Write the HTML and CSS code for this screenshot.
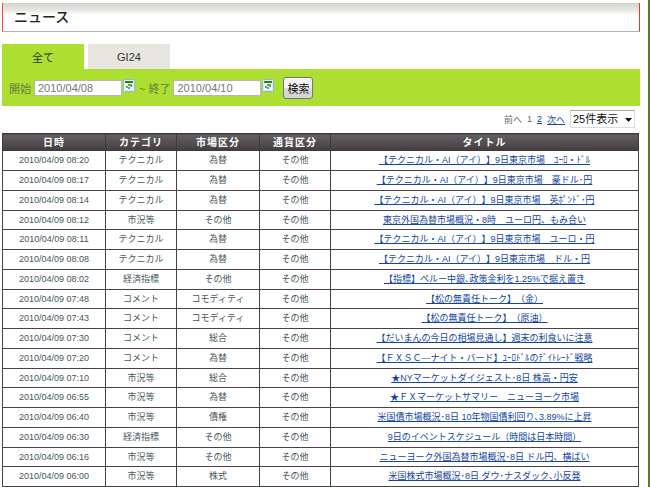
FILE: index.html
```html
<!DOCTYPE html>
<html lang="ja">
<head>
    <meta charset="UTF-8">
    <meta name="viewport" content="width=device-width, initial-scale=1.0">
    <title>ニュース</title>

    <link rel="stylesheet" href="styles.css">
</head>
<body>
    <div class="container">
        <h1 class="title">ニュース</h1>

        <div class="tabs">
            <button class="tab active" type="button">全て</button>
            <button class="tab" type="button">GI24</button>
        </div>

        <form class="search">
            <label for="dateFrom">開始</label>
            <input class="date" type="text" id="dateFrom" value="2010/04/08">
            <button class="calendar" type="button" aria-label="開始日">
                <svg width="12" height="13" viewBox="0 0 12 13">
                    <rect x="0.5" y="0.5" width="11" height="12" rx="1" fill="#d9ebf8" stroke="#8fb8dc"/>
                    <rect x="2" y="2" width="8" height="2" fill="#2f7a22"/>
                    <rect x="2" y="4" width="8" height="7" fill="#f4faf4"/>
                    <path d="M5 5h2v2H5zM7 5h2v3H7zM3 7h2v2H3zM5 8h2v2H5z" fill="#6f9a78"/>
                </svg>
            </button>
            <label for="dateTo">~ 終了</label>
            <input class="date" type="text" id="dateTo" value="2010/04/10">
            <button class="calendar" type="button" aria-label="終了日">
                <svg width="12" height="13" viewBox="0 0 12 13">
                    <rect x="0.5" y="0.5" width="11" height="12" rx="1" fill="#d9ebf8" stroke="#8fb8dc"/>
                    <rect x="2" y="2" width="8" height="2" fill="#2f7a22"/>
                    <rect x="2" y="4" width="8" height="7" fill="#f4faf4"/>
                    <path d="M5 5h2v2H5zM7 5h2v3H7zM3 7h2v2H3zM5 8h2v2H5z" fill="#6f9a78"/>
                </svg>
            </button>
            <button class="btn" type="submit">検索</button>
        </form>

        <div class="pager">
            <span>前へ</span>
            <span>1</span>
            <a href="#">2</a>
            <a href="#">次へ</a>
            <div class="select-box">
                <select class="count" aria-label="表示件数">
                    <option>25件表示</option>
                </select>
                <svg class="arrow" width="7" height="4" viewBox="0 0 7 4"><path d="M0 0h7L3.5 4z" fill="#111"/></svg>
            </div>
        </div>

        <table class="news">
            <colgroup>
                <col class="col-date">
                <col class="col-category">
                <col class="col-market">
                <col class="col-currency">
                <col>
            </colgroup>
            <thead>
                <tr><th>日時</th><th>カテゴリ</th><th>市場区分</th><th>通貨区分</th><th>タイトル</th></tr>
            </thead>
            <tbody>
                <tr><td>2010/04/09 08:20</td><td>テクニカル</td><td>為替</td><td>その他</td><td><a href="#">【テクニカル・AI（アイ）】9日東京市場　ﾕｰﾛ・ﾄﾞﾙ</a></td></tr>
                <tr><td>2010/04/09 08:17</td><td>テクニカル</td><td>為替</td><td>その他</td><td><a href="#">【テクニカル・AI（アイ）】9日東京市場　豪ドル･円</a></td></tr>
                <tr><td>2010/04/09 08:14</td><td>テクニカル</td><td>為替</td><td>その他</td><td><a href="#">【テクニカル・AI（アイ）】9日東京市場　英ﾎﾟﾝﾄﾞ･円</a></td></tr>
                <tr><td>2010/04/09 08:12</td><td>市況等</td><td>その他</td><td>その他</td><td><a href="#">東京外国為替市場概況・8時　ユーロ円、もみ合い</a></td></tr>
                <tr><td>2010/04/09 08:11</td><td>テクニカル</td><td>為替</td><td>その他</td><td><a href="#">【テクニカル・AI（アイ）】9日東京市場　ユーロ・円</a></td></tr>
                <tr><td>2010/04/09 08:08</td><td>テクニカル</td><td>為替</td><td>その他</td><td><a href="#">【テクニカル・AI（アイ）】9日東京市場　ドル・円</a></td></tr>
                <tr><td>2010/04/09 08:02</td><td>経済指標</td><td>その他</td><td>その他</td><td><a href="#">【指標】ペルー中銀､政策金利を1.25%で据え置き</a></td></tr>
                <tr><td>2010/04/09 07:48</td><td>コメント</td><td>コモディティ</td><td>その他</td><td><a href="#">【松の無責任トーク】（金）</a></td></tr>
                <tr><td>2010/04/09 07:43</td><td>コメント</td><td>コモディティ</td><td>その他</td><td><a href="#">【松の無責任トーク】（原油）</a></td></tr>
                <tr><td>2010/04/09 07:30</td><td>コメント</td><td>総合</td><td>その他</td><td><a href="#">【だいまんの今日の相場見通し】週末の利食いに注意</a></td></tr>
                <tr><td>2010/04/09 07:20</td><td>コメント</td><td>為替</td><td>その他</td><td><a href="#">【ＦＸＳＣ―ナイト・バード】ﾕｰﾛﾄﾞﾙのﾃﾞｲﾄﾚｰﾄﾞ戦略</a></td></tr>
                <tr><td>2010/04/09 07:10</td><td>市況等</td><td>総合</td><td>その他</td><td><a href="#">★NYマーケットダイジェスト･8日 株高・円安</a></td></tr>
                <tr><td>2010/04/09 06:55</td><td>市況等</td><td>為替</td><td>その他</td><td><a href="#">★ＦＸマーケットサマリー　ニューヨーク市場</a></td></tr>
                <tr><td>2010/04/09 06:40</td><td>市況等</td><td>債権</td><td>その他</td><td><a href="#">米国債市場概況･8日 10年物国債利回り､3.89%に上昇</a></td></tr>
                <tr><td>2010/04/09 06:30</td><td>経済指標</td><td>その他</td><td>その他</td><td><a href="#">9日のイベントスケジュール（時間は日本時間）</a></td></tr>
                <tr><td>2010/04/09 06:16</td><td>市況等</td><td>その他</td><td>その他</td><td><a href="#">ニューヨーク外国為替市場概況･8日 ドル円、横ばい</a></td></tr>
                <tr><td>2010/04/09 06:00</td><td>市況等</td><td>株式</td><td>その他</td><td><a href="#">米国株式市場概況･8日 ダウ･ナスダック､小反発</a></td></tr>
            </tbody>
        </table>
    </div>
</body>
</html>
```
FILE: styles.css
```css
* {
    box-sizing: border-box;
}
body, button, input, select {
    font-family: "Liberation Sans", "Noto Sans CJK JP", sans-serif;
}
body {
    margin: 0;
    min-height: 100vh;
    background-color: #fff;
    border-right: 2px solid #4f8314;
    text-spacing-trim: space-all;
}
.container {
    padding: 3px 8px 0 2px;
}
.title {
    margin: 0 0 12px;
    padding-left: 11px;
    height: 29px;
    line-height: 28px;
    font-size: 14px;
    font-weight: 500;
    color: #222;
    background: linear-gradient(#d2d2cf, #e3e3df 6px, #f5f5f1 10px, #fff 12px);
    border-left: 1px solid #f44;
    border-right: 1px solid #e33;
    border-bottom: 1px solid #b9aebf;
}
.tabs {
    display: flex;
    gap: 4px;
}
.tab {
    width: 82px;
    height: 25px;
    padding: 0;
    border: none;
    font-size: 11px;
    color: #333;
    background-color: #e7e7df;
    cursor: pointer;
}
.tab.active {
    background-color: #addf32;
}
.search {
    display: flex;
    align-items: center;
    height: 37px;
    padding-left: 7px;
    font-size: 11px;
    color: #6b7b3c;
    background-color: #addf32;
}
.date {
    width: 88px;
    height: 16px;
    margin-left: 3px;
    padding: 0 3px;
    border: 1px solid #b5b5b5;
    font-size: 11px;
    color: #777;
    background-color: #fff;
}
.calendar {
    display: flex;
    margin: 0 4px 4px 1px;
    padding: 0;
    border: none;
    background: none;
    cursor: pointer;
}
.btn {
    width: 30px;
    height: 22px;
    margin-left: 5px;
    padding: 0;
    border: 1px solid #777;
    border-radius: 3px;
    font-size: 11px;
    color: #111;
    background: linear-gradient(#f4f4f4 50%, #dcdcdc 50%, #d2d2d2);
    cursor: pointer;
}
.pager {
    display: flex;
    align-items: center;
    justify-content: flex-end;
    gap: 5px;
    padding: 4px 5px 5px;
    font-size: 9px;
    color: #666;
}
a {
    color: #1445a0;
}
.select-box {
    position: relative;
}
.count {
    display: block;
    appearance: none;
    width: 65px;
    height: 18px;
    padding: 0 2px;
    border: 1px solid #d5dde5;
    border-top-color: #aaa;
    font-size: 11px;
    color: #111;
    background-color: #fff;
}
.arrow {
    position: absolute;
    right: 3px;
    top: 8px;
    pointer-events: none;
}
.news {
    width: calc(100% - 1px);
    table-layout: fixed;
    border-collapse: collapse;
    font-size: 9px;
    line-height: 13px;
    color: #47565c;
    text-align: center;
}
.col-date {
    width: 103px;
}
.col-category {
    width: 71px;
}
.col-market {
    width: 83px;
}
.col-currency {
    width: 71px;
}
.news th {
    height: 17px;
    padding: 0;
    border: 1px solid #40383e;
    font-size: 10px;
    letter-spacing: 1px;
    color: #fff;
    background: linear-gradient(#636064, #433d40);
}
.news td {
    height: 20px;
    padding: 0;
    border: 1px solid #4b3f49;
    white-space: nowrap;
}
.news tr:nth-child(4n) td {
    height: 19px;
}
```
